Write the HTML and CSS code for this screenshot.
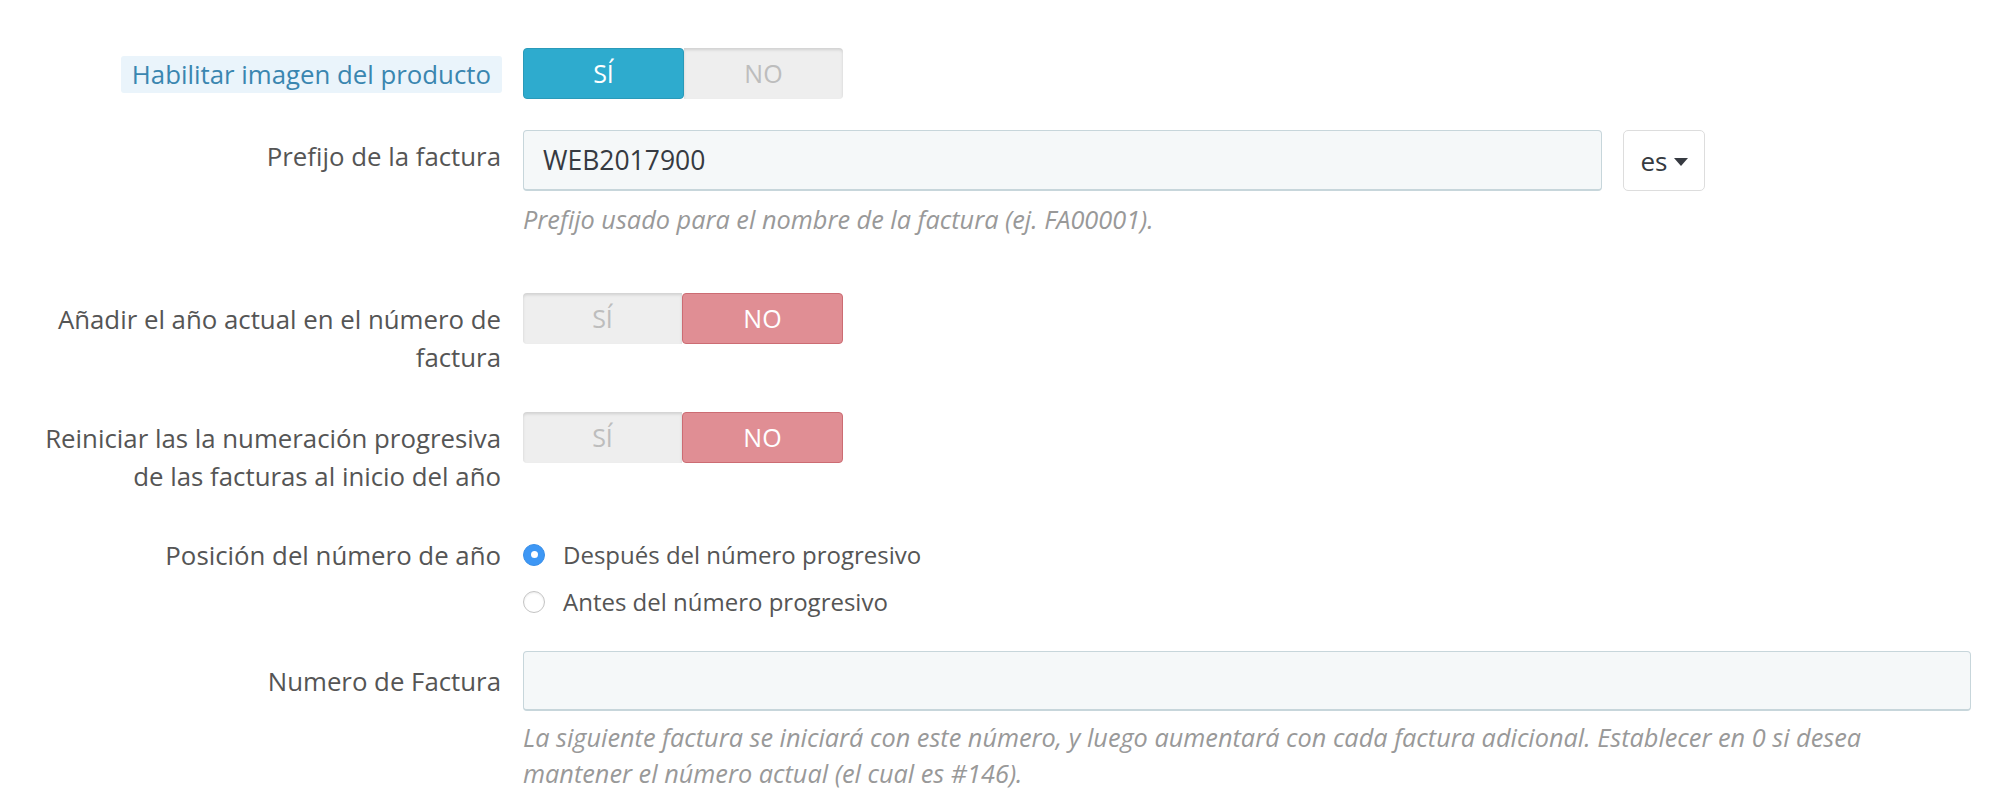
FILE: index.html
```html
<!DOCTYPE html>
<html lang="es">
<head>
<meta charset="utf-8">
<title>Facturas</title>
<link rel="stylesheet" href="styles.css">
</head>
<body>
<form class="form">
  <div class="row row-1">
    <div class="label"><span class="label-hl">Habilitar imagen del producto</span></div>
    <div class="control">
      <div class="switch">
        <span class="seg seg-on-blue">SÍ</span>
        <span class="seg seg-off">NO</span>
      </div>
    </div>
  </div>

  <div class="row row-2">
    <div class="label">Prefijo de la factura</div>
    <div class="control">
      <div class="input-group">
        <div class="input input-prefix">WEB2017900</div>
        <div class="lang-btn">es <span class="caret"></span></div>
      </div>
      <p class="help">Prefijo usado para el nombre de la factura (ej. FA00001).</p>
    </div>
  </div>

  <div class="row row-3">
    <div class="label">Añadir el año actual en el número de factura</div>
    <div class="control">
      <div class="switch">
        <span class="seg seg-off">SÍ</span>
        <span class="seg seg-on-red">NO</span>
      </div>
    </div>
  </div>

  <div class="row row-4">
    <div class="label">Reiniciar las la numeración progresiva de las facturas al inicio del año</div>
    <div class="control">
      <div class="switch">
        <span class="seg seg-off">SÍ</span>
        <span class="seg seg-on-red">NO</span>
      </div>
    </div>
  </div>

  <div class="row row-5">
    <div class="label">Posición del número de año</div>
    <div class="control radios">
      <div class="radio"><span class="dot dot-checked"></span>Después del número progresivo</div>
      <div class="radio"><span class="dot"></span>Antes del número progresivo</div>
    </div>
  </div>

  <div class="row row-6">
    <div class="label">Numero de Factura</div>
    <div class="control">
      <div class="input input-full"></div>
      <p class="help help-wide">La siguiente factura se iniciará con este número, y luego aumentará con cada factura adicional. Establecer en 0 si desea mantener el número actual (el cual es #146).</p>
    </div>
  </div>
</form>
</body>
</html>
```

FILE: styles.css
```css
html, body {
  margin: 0;
  padding: 0;
  background: #ffffff;
}

body {
  font-family: "Open Sans", "Liberation Sans", sans-serif;
  font-size: 25.8px;
  color: #555555;
}

.form {
  padding-top: 48px;
}

.row {
  display: flex;
  align-items: flex-start;
}

.row-1 { margin-bottom: 31px; }
.row-2 { margin-bottom: 56px; }
.row-3 { margin-bottom: 36px; }
.row-4 { margin-bottom: 34px; }
.row-5 { margin-bottom: 26px; }

.label {
  box-sizing: border-box;
  width: 472px;
  margin-left: 29px;
  text-align: right;
  line-height: 38px;
  padding-top: 7px;
  color: #555555;
}

.row-6 .label { padding-top: 11px; }

.label-hl {
  display: inline-block;
  background: #eaf4fb;
  color: #3a86b0;
  padding: 0 11px;
  line-height: 37px;
  border-radius: 3px;
  margin-top: 1px;
  margin-right: -1px;
}

.control {
  margin-left: 22px;
}

/* switch */
.switch {
  display: flex;
  width: 320px;
  height: 51px;
}

.seg {
  box-sizing: border-box;
  flex: 1;
  display: flex;
  align-items: center;
  justify-content: center;
  font-size: 25px;
  line-height: 1;
}

.seg:first-child { border-radius: 4px 0 0 4px; }
.seg:last-child { border-radius: 0 4px 4px 0; }

.seg-off {
  background: #eeeeee;
  color: #bdbdbd;
  box-shadow: inset 0 2px 3px rgba(0, 0, 0, 0.12);
}

.seg-on-blue {
  background: #2eabce;
  color: #ffffff;
  border: 1px solid #2a9ab9;
  border-radius: 4px !important;
}

.seg-on-red {
  background: #e08e94;
  color: #ffffff;
  border: 1px solid #cc6c73;
  border-radius: 4px !important;
}

/* inputs */
.input-group {
  display: flex;
  align-items: flex-start;
  gap: 21px;
}

.input {
  box-sizing: border-box;
  height: 61px;
  background: #f5f8f9;
  border: 1px solid #c7d6db;
  border-bottom-width: 2px;
  border-radius: 4px;
  padding-left: 19px;
  display: flex;
  align-items: center;
  color: #363a41;
  font-size: 26.5px;
}

.input-prefix { width: 1079px; }
.input-full { width: 1448px; height: 60px; }

.lang-btn {
  box-sizing: border-box;
  width: 82px;
  height: 61px;
  background: #ffffff;
  border: 1px solid #dddddd;
  border-radius: 5px;
  display: flex;
  align-items: center;
  justify-content: center;
  gap: 6px;
  color: #363a41;
  font-size: 26px;
}

.caret {
  width: 0;
  height: 0;
  border-left: 7px solid transparent;
  border-right: 7px solid transparent;
  border-top: 8px solid #363a41;
  margin-top: 2px;
}

.help {
  margin: 10px 0 0 0;
  line-height: 36px;
  font-style: italic;
  color: #999999;
  font-size: 25.3px;
}

.help-wide {
  margin-top: 8px;
  max-width: 1380px;
}

/* radios */
.radios {
  padding-top: 2px;
}

.radio {
  display: flex;
  align-items: center;
  height: 47px;
  color: #555555;
  font-size: 24px;
}

.dot {
  box-sizing: border-box;
  width: 22px;
  height: 22px;
  border-radius: 50%;
  background: #ffffff;
  border: 1px solid #c4c4c4;
  box-shadow: inset 0 1px 2px rgba(0, 0, 0, 0.08);
  margin-right: 18px;
  flex-shrink: 0;
  display: flex;
  align-items: center;
  justify-content: center;
}

.dot-checked {
  background: #3d97f5;
  border-color: #3a8fe8;
  box-shadow: none;
}

.dot-checked::after {
  content: "";
  width: 7px;
  height: 7px;
  border-radius: 50%;
  background: #ffffff;
}
```
